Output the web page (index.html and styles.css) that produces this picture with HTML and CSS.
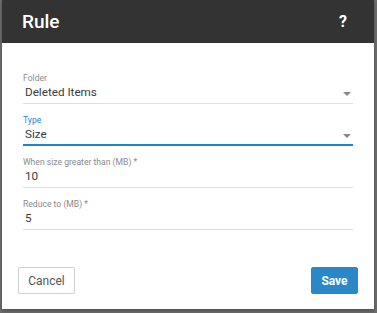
FILE: index.html
```html
<!DOCTYPE html>
<html>
<head>
<meta charset="utf-8">
<link rel="stylesheet" href="styles.css">
</head>
<body>
<div class="dialog">
  <div class="header">
    <span class="title">Rule</span>
    <span class="help">?</span>
  </div>
  <div class="body">
    <div class="field">
      <div class="label">Folder</div>
      <div class="value">Deleted Items<span class="caret"></span></div>
    </div>
    <div class="field focused">
      <div class="label">Type</div>
      <div class="value">Size<span class="caret"></span></div>
    </div>
    <div class="field">
      <div class="label">When size greater than (MB) *</div>
      <div class="value">10</div>
    </div>
    <div class="field">
      <div class="label">Reduce to (MB) *</div>
      <div class="value">5</div>
    </div>
  </div>
  <div class="footer">
    <button class="btn cancel">Cancel</button>
    <button class="btn save">Save</button>
  </div>
</div>
</body>
</html>
```
FILE: styles.css
```css
html, body {
  margin: 0;
  padding: 0;
  background: #6e6e6e;
  font-family: Roboto, "Liberation Sans", sans-serif;
}
body {
  width: 377px;
  height: 313px;
  overflow: hidden;
}
.dialog {
  margin-left: 2px;
  width: 372px;
  height: 309px;
  background: #fff;
  display: flex;
  flex-direction: column;
  box-shadow: 0 2px 4px rgba(0,0,0,0.3);
}
.header {
  height: 43px;
  background: #333333;
  display: flex;
  align-items: center;
  justify-content: space-between;
  padding: 0 27px 0 20px;
  color: #fff;
}
.title {
  font-size: 19px;
  font-weight: 500;
}
.help {
  font-size: 16px;
  font-weight: 700;
}
.body {
  padding: 30px 21px 0 21px;
  display: flex;
  flex-direction: column;
  gap: 11px;
}
.field {
  border-bottom: 1px solid #e0e0e0;
  height: 30px;
}
.field.focused {
  border-bottom: 2px solid #1a87cc;
  height: 29px;
}
.label {
  font-size: 8.6px;
  color: #8a8a8a;
  line-height: 10px;
}
.focused .label {
  color: #1a87cc;
}
.value {
  font-size: 11.7px;
  color: #3a3a3a;
  line-height: 16px;
  margin-top: 1px;
  padding-left: 2px;
  display: flex;
  align-items: center;
  justify-content: space-between;
}
.caret {
  width: 0;
  height: 0;
  border-left: 4px solid transparent;
  border-right: 4px solid transparent;
  border-top: 4px solid #888;
  margin-right: 2px;
  margin-top: 4px;
}
.footer {
  margin-top: auto;
  display: flex;
  justify-content: space-between;
  padding: 0 16px 15px 16px;
}
.btn {
  height: 27px;
  font-family: Roboto, "Liberation Sans", sans-serif;
  font-size: 12px;
  border-radius: 2px;
  padding: 0;
}
.cancel {
  width: 57px;
  background: #fff;
  border: 1px solid #cfcfcf;
  color: #555;
}
.save {
  width: 47px;
  background: #2b88c8;
  border: 1px solid #2b88c8;
  color: #fff;
  font-weight: 700;
}
```
